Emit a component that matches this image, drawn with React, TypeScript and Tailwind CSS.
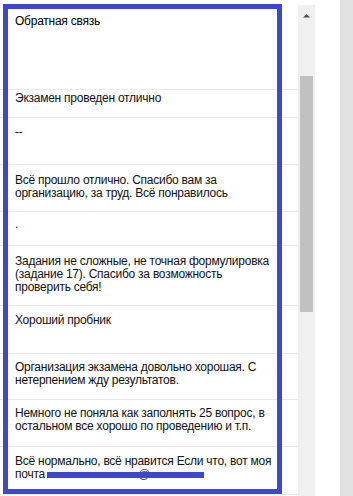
import React from "react";

type Row = { lines: string[]; h: string; pt: string };

const rows: Row[] = [
  { lines: ["Экзамен проведен отлично"], h: "h-[28px]", pt: "pt-[2px]" },
  { lines: ["--"], h: "h-[47px]", pt: "pt-[8px]" },
  {
    lines: ["Всё прошло отлично. Спасибо вам за", "организацию, за труд. Всё понравилось"],
    h: "h-[47px]",
    pt: "pt-[9px]",
  },
  { lines: ["."], h: "h-[34px]", pt: "pt-[6px]" },
  {
    lines: [
      "Задания не сложные, не точная формулировка",
      "(задание 17). Спасибо за возможность",
      "проверить себя!",
    ],
    h: "h-[60px]",
    pt: "pt-[9px]",
  },
  { lines: ["Хороший пробник"], h: "h-[48px]", pt: "pt-[8px]" },
  {
    lines: ["Организация экзамена довольно хорошая. С", "нетерпением жду результатов."],
    h: "h-[46px]",
    pt: "pt-[7px]",
  },
  {
    lines: ["Немного не поняла как заполнять 25 вопрос, в", "остальном все хорошо по проведению и т.п."],
    h: "h-[47px]",
    pt: "pt-[7px]",
  },
];

export default function App() {
  return (
    <div
      className="relative flex h-[496px] w-[353px] overflow-hidden bg-white text-[12px] leading-[13px] tracking-[-0.25px] text-black"
      style={{ fontFamily: '"Liberation Sans", Arial, sans-serif' }}
    >
      {/* answers column */}
      <div className="flex w-[298px] shrink-0 flex-col">
        <div className="h-[90px] shrink-0 border-b border-[#e9e9e9] pl-[15px] pt-[15px]">
          Обратная связь
        </div>
        {rows.map((r, i) => (
          <div
            key={i}
            className={`${r.h} ${r.pt} shrink-0 border-b border-[#e9e9e9] pl-[15px] whitespace-nowrap text-[#111]`}
          >
            {r.lines.map((l, j) => (
              <div key={j}>{l}</div>
            ))}
          </div>
        ))}
        <div className="relative h-[48px] shrink-0 border-b border-[#e9e9e9] pl-[15px] pt-[8px] whitespace-nowrap text-[#111]">
          <div>Всё нормально, всё нравится Если что, вот моя</div>
          <div className="relative">
            почта
            <span className="absolute left-[123px] top-[0px] text-[#444]">@</span>
            <span className="absolute left-[32px] top-[4px] h-[6px] w-[157px] bg-[#3f48cc]" />
          </div>
        </div>
        <div className="flex-1" />
      </div>

      {/* scrollbar */}
      <div className="mt-[5px] flex w-[17px] shrink-0 flex-col items-center bg-[#f0f0f0]">
        <svg width="9" height="5" viewBox="0 0 9 5" className="mt-[8px]">
          <path d="M1 4.5 L4.5 1 L8 4.5 Z" fill="#505050" />
        </svg>
        <div className="mt-[58px] h-[236px] w-[13px] bg-[#c1c1c1]" />
      </div>

      <div className="w-[25px] shrink-0" />
      <div className="w-[13px] shrink-0 bg-[#e1e1e1]" />

      {/* highlight frame */}
      <div className="pointer-events-none absolute left-[3px] top-[4px] h-[490px] w-[279px] border-[5px] border-[#3f48cc]" />
    </div>
  );
}
